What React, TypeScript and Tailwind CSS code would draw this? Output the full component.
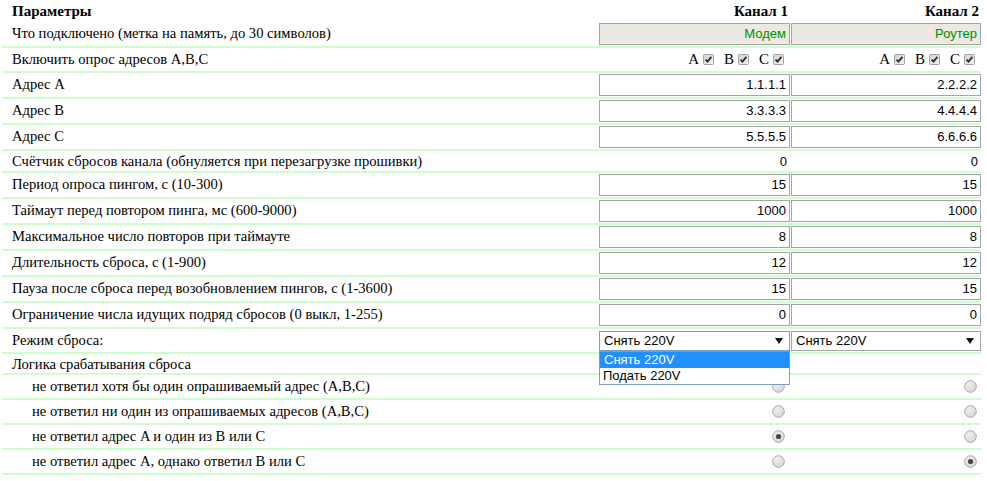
import React from "react";

const serif = { fontFamily: '"Liberation Serif", "Times New Roman", serif' };
const sans = { fontFamily: '"Liberation Sans", Arial, sans-serif' };

function Box({ value, disabled, wide }: { value: string; disabled?: boolean; wide?: boolean }) {
  return (
    <div
      style={sans}
      className={`ml-[1px] h-[22px] ${wide ? "w-[191px]" : "w-[190px]"} border border-[#a5a5a5] flex items-center justify-end pr-[3px] text-[13px] ${
        disabled ? "bg-[#ebe9e1] text-[#009000]" : "bg-white text-black"
      }`}
    >
      {value}
    </div>
  );
}

function Check() {
  return (
    <svg width="11" height="11" viewBox="0 0 11 11" className="ml-[4px] shrink-0">
      <defs>
        <linearGradient id="cbg" x1="0" y1="0" x2="1" y2="1">
          <stop offset="0" stopColor="#d2d2d2" />
          <stop offset="1" stopColor="#f2f2f2" />
        </linearGradient>
      </defs>
      <rect x="0.5" y="0.5" width="10" height="10" rx="1" fill="url(#cbg)" stroke="#a2a2a2" />
      <path d="M2.6 5.6 L4.5 7.6 L8.4 2.9" fill="none" stroke="#2e2e2e" strokeWidth="1.9" />
    </svg>
  );
}

function Checks() {
  return (
    <div style={serif} className="w-full flex items-center justify-end pr-[6px] text-[15px] text-black">
      <span>A</span>
      <Check />
      <span className="ml-[10px]">B</span>
      <Check />
      <span className="ml-[10px]">C</span>
      <Check />
    </div>
  );
}

function Radio({ on }: { on?: boolean }) {
  return (
    <svg width="13" height="13" viewBox="0 0 13 13">
      <defs>
        <radialGradient id="rg" cx="0.35" cy="0.3" r="0.8">
          <stop offset="0" stopColor="#f0f0f0" />
          <stop offset="1" stopColor="#d4d4d4" />
        </radialGradient>
      </defs>
      <circle cx="6.5" cy="6.5" r="5.8" fill="url(#rg)" stroke="#a8a8a8" strokeWidth="1" />
      {on && <circle cx="6.5" cy="6.5" r="2.6" fill="#4a4a4a" />}
    </svg>
  );
}

function Arrow() {
  return (
    <svg width="8" height="6" viewBox="0 0 8 6" className="shrink-0">
      <path d="M0 0 H8 L4 6 Z" fill="#111" />
    </svg>
  );
}

function Select({ focused, wide, open }: { focused?: boolean; wide?: boolean; open?: boolean }) {
  return (
    <div className="relative ml-[1px]">
      <div
        style={sans}
        className={`h-[20px] ${wide ? "w-[191px]" : "w-[190px]"} border ${
          focused ? "border-[#7f9db9]" : "border-[#a5a5a5]"
        } bg-white flex items-center justify-between pl-[4px] pr-[6px] text-[13px] text-black`}
      >
        <span>Снять 220V</span>
        <Arrow />
      </div>
      {open && (
        <div
          style={sans}
          className="absolute left-0 top-full z-10 w-[191px] border border-[#7f9db9] bg-white text-[13px] text-black"
        >
          <div className="h-[16px] bg-[#1e90ff] text-white pl-[4px] flex items-center">Снять 220V</div>
          <div className="h-[16px] pl-[3px] flex items-center">Подать 220V</div>
        </div>
      )}
    </div>
  );
}

type Row = {
  label: string;
  h: string;
  indent?: boolean;
  c1?: React.ReactNode;
  c2?: React.ReactNode;
  right?: boolean;
};

const num = (v: string) => (
  <span style={sans} className="text-[13px] text-black pr-[3px]">
    {v}
  </span>
);

const rows: Row[] = [
  {
    label: "Что подключено (метка на память, до 30 символов)",
    h: "h-[26px]",
    c1: <Box value="Модем" disabled wide />,
    c2: <Box value="Роутер" disabled />,
  },
  { label: "Включить опрос адресов A,B,C", h: "h-[25px]", c1: <Checks />, c2: <Checks /> },
  { label: "Адрес A", h: "h-[26px]", c1: <Box value="1.1.1.1" wide />, c2: <Box value="2.2.2.2" /> },
  { label: "Адрес B", h: "h-[26px]", c1: <Box value="3.3.3.3" wide />, c2: <Box value="4.4.4.4" /> },
  { label: "Адрес C", h: "h-[26px]", c1: <Box value="5.5.5.5" wide />, c2: <Box value="6.6.6.6" /> },
  {
    label: "Счётчик сбросов канала (обнуляется при перезагрузке прошивки)",
    h: "h-[22px]",
    c1: num("0"),
    c2: num("0"),
    right: true,
  },
  { label: "Период опроса пингом, с (10-300)", h: "h-[26px]", c1: <Box value="15" wide />, c2: <Box value="15" /> },
  {
    label: "Таймаут перед повтором пинга, мс (600-9000)",
    h: "h-[26px]",
    c1: <Box value="1000" wide />,
    c2: <Box value="1000" />,
  },
  { label: "Максимальное число повторов при таймауте", h: "h-[26px]", c1: <Box value="8" wide />, c2: <Box value="8" /> },
  { label: "Длительность сброса, с (1-900)", h: "h-[26px]", c1: <Box value="12" wide />, c2: <Box value="12" /> },
  {
    label: "Пауза после сброса перед возобновлением пингов, с (1-3600)",
    h: "h-[26px]",
    c1: <Box value="15" wide />,
    c2: <Box value="15" />,
  },
  {
    label: "Ограничение числа идущих подряд сбросов (0 выкл, 1-255)",
    h: "h-[26px]",
    c1: <Box value="0" wide />,
    c2: <Box value="0" />,
  },
  { label: "Режим сброса:", h: "h-[25px]", c1: <Select focused wide open />, c2: <Select /> },
  { label: "Логика срабатывания сброса", h: "h-[21px]" },
  {
    label: "не ответил хотя бы один опрашиваемый адрес (A,B,C)",
    h: "h-[25px]",
    indent: true,
    c1: <Radio />,
    c2: <Radio />,
    right: true,
  },
  {
    label: "не ответил ни один из опрашиваемых адресов (A,B,C)",
    h: "h-[25px]",
    indent: true,
    c1: <Radio />,
    c2: <Radio />,
    right: true,
  },
  {
    label: "не ответил адрес A и один из B или C",
    h: "h-[25px]",
    indent: true,
    c1: <Radio on />,
    c2: <Radio />,
    right: true,
  },
  {
    label: "не ответил адрес A, однако ответил B или C",
    h: "h-[25px]",
    indent: true,
    c1: <Radio />,
    c2: <Radio on />,
    right: true,
  },
];

export default function App() {
  return (
    <div className="w-[987px] h-[481px] bg-white overflow-hidden">
      <div className="ml-[2px] w-[979px]">
        <div
          style={serif}
          className="grid grid-cols-[596px_192px_191px] h-[22px] items-center text-[15px] font-bold text-black"
        >
          <div className="pl-[10px]">Параметры</div>
          <div className="text-right pr-[2px]">Канал 1</div>
          <div className="text-right pr-[2px]">Канал 2</div>
        </div>
        {rows.map((r, i) => (
          <div
            key={i}
            className={`grid grid-cols-[596px_192px_191px] ${r.h} border-b-2 border-[#ccffcc] items-center`}
          >
            <div
              style={serif}
              className={`${r.indent ? "pl-[30px]" : "pl-[10px]"} text-[14.6px] text-black whitespace-nowrap`}
            >
              {r.label}
            </div>
            <div className={`flex items-center ${r.right ? "justify-end" : ""} ${r.indent ? "pr-[5px]" : ""}`}>
              {r.c1}
            </div>
            <div className={`flex items-center ${r.right ? "justify-end" : ""} ${r.indent ? "pr-[4px]" : ""}`}>
              {r.c2}
            </div>
          </div>
        ))}
      </div>
    </div>
  );
}
